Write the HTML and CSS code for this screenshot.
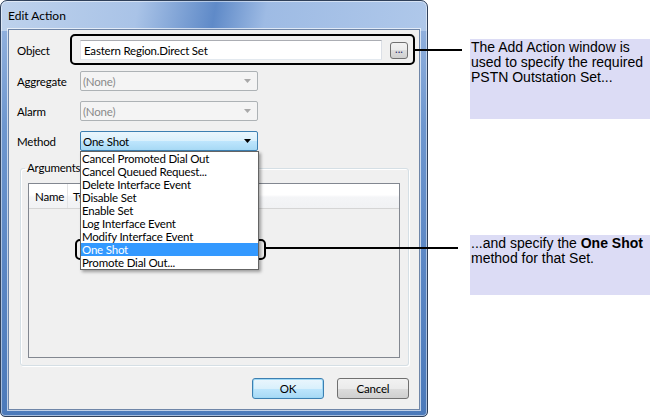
FILE: index.html
```html
<!DOCTYPE html>
<html>
<head>
<meta charset="utf-8">
<title>Edit Action</title>
<link rel="stylesheet" href="styles.css">
</head>
<body>
<div class="page">
  <div class="window">
    <div class="titlebar">Edit Action</div>
    <div class="client">
      <div class="row">
        <span class="label">Object</span>
        <div class="textbox">Eastern Region.Direct Set</div>
        <div class="browse">...</div>
      </div>
      <div class="row row-agg">
        <span class="label">Aggregate</span>
        <div class="combo disabled"><span class="combo-text">(None)</span><svg class="arrow" width="7" height="4" viewBox="0 0 7 4"><path d="M0 0h7L3.5 4z"/></svg></div>
      </div>
      <div class="row row-gap">
        <span class="label">Alarm</span>
        <div class="combo disabled"><span class="combo-text">(None)</span><svg class="arrow" width="7" height="4" viewBox="0 0 7 4"><path d="M0 0h7L3.5 4z"/></svg></div>
      </div>
      <div class="row row-gap">
        <span class="label">Method</span>
        <div class="combo active"><span class="combo-text">One Shot</span><svg class="arrow" width="7" height="4" viewBox="0 0 7 4"><path d="M0 0h7L3.5 4z"/></svg>
          <ul class="droplist">
            <li>Cancel Promoted Dial Out</li>
            <li>Cancel Queued Request...</li>
            <li>Delete Interface Event</li>
            <li>Disable Set</li>
            <li>Enable Set</li>
            <li>Log Interface Event</li>
            <li>Modify Interface Event</li>
            <li class="selected">One Shot</li>
            <li>Promote Dial Out...</li>
          </ul>
        </div>
      </div>
      <fieldset class="group">
        <legend>Arguments</legend>
        <div class="listview">
          <div class="lv-header">
            <div class="col col-name">Name</div>
            <div class="col col-type">Type</div>
          </div>
        </div>
      </fieldset>
      <div class="buttons">
        <div class="btn btn-default">OK</div>
        <div class="btn">Cancel</div>
      </div>
    </div>
  </div>
  <div class="notes">
    <div class="note note-top">The Add Action window is used to specify the required PSTN Outstation Set...</div>
    <div class="note note-bottom">...and specify the <b>One Shot</b> method for that Set.</div>
  </div>
  <div class="hl hl-object"></div>
  <div class="hl hl-method"></div>
  <div class="leader leader-object"></div>
  <div class="leader leader-method"></div>
</div>
</body>
</html>
```
FILE: styles.css
```css
html, body {
  margin: 0;
  padding: 0;
  background: #ffffff;
}

body {
  font-family: Lato, "Liberation Sans", sans-serif;
  font-size: 11.5px;
  letter-spacing: -0.2px;
  color: #000;
}

.page {
  position: relative;
  width: 660px;
  height: 418px;
  display: flex;
  align-items: flex-start;
  overflow: hidden;
}

/* ---------- window frame ---------- */
.window {
  width: 428px;
  height: 417px;
  box-sizing: border-box;
  border: 1px solid #2f405a;
  border-radius: 7px 7px 5px 5px;
  padding: 0 7px 6px;
  display: flex;
  flex-direction: column;
  background:
    linear-gradient(100deg, #bed2ec 0%, #a9c3e7 32%, #5f8ac8 50%, #9ebbe4 62%, #afc8ea 100%) top / 100% 30px no-repeat,
    linear-gradient(to bottom, #9ab7e1 0%, #6e97cf 30%, #5a86c4 65%, #4c7aba 100%);
  box-shadow: inset 0 0 0 1px rgba(255, 255, 255, 0.5);
}

.titlebar {
  height: 28px;
  display: flex;
  align-items: center;
  font-size: 12px;
  letter-spacing: 0;
  color: #000;
}

.client {
  flex: 1;
  background: #f0f0f0;
  border: 1px solid #6f86a8;
  box-shadow: 0 0 0 1px rgba(255, 255, 255, 0.65);
  padding-top: 10px;
  display: flex;
  flex-direction: column;
}

/* ---------- form rows ---------- */
.row {
  display: flex;
  align-items: center;
  height: 20px;
}

.row-agg { margin-top: 11px; }
.row-gap { margin-top: 10px; }

.label {
  width: 63px;
  margin-left: 8px;
}

.textbox {
  width: 302px;
  height: 20px;
  box-sizing: border-box;
  border: 1px solid;
  border-color: #abadb3 #dbdfe6 #e3e9ef #e2e3ea;
  background: #fff;
  padding-left: 3px;
  display: flex;
  align-items: center;
}

.browse {
  margin-left: 8px;
  width: 18px;
  height: 17px;
  box-sizing: border-box;
  border: 1px solid #707070;
  border-radius: 3px;
  background: linear-gradient(#f2f2f2 0%, #ebebeb 50%, #dddddd 50%, #cfcfcf 100%);
  font-size: 11px;
  line-height: 12px;
  text-align: center;
  color: #2a2a6a;
  letter-spacing: 0;
}

.combo {
  position: relative;
  width: 178px;
  height: 20px;
  box-sizing: border-box;
  border: 1px solid #adb2b5;
  border-radius: 2px;
  display: flex;
  align-items: center;
  padding: 0 6px 0 2px;
}

.combo-text {
  flex: 1;
}

.combo .arrow {
  display: block;
}

.combo.disabled {
  background: #f4f4f4;
  color: #8a8a8a;
}

.combo.disabled .arrow {
  fill: #a9a9a9;
}

.combo.active {
  border-color: #3c7fb1;
  background: linear-gradient(#eaf6fd 0%, #d9f0fc 50%, #bee6fd 50%, #a7d9f5 100%);
}

.combo.active .arrow {
  fill: #000;
}

.droplist {
  position: absolute;
  top: 19px;
  left: -1px;
  width: 179px;
  box-sizing: border-box;
  margin: 0;
  padding: 0;
  list-style: none;
  background: #fff;
  border: 1px solid #646464;
  box-shadow: 2px 2px 3px rgba(0, 0, 0, 0.35);
  z-index: 5;
  color: #000;
}

.droplist li {
  height: 13px;
  line-height: 13px;
  padding-left: 1px;
  white-space: nowrap;
}

.droplist li.selected {
  background: #3399ff;
  color: #fff;
}

/* ---------- arguments group ---------- */
.group {
  margin: 10px 10px 0 11px;
  padding: 8px 8px 7px 7px;
  border: 1px solid #d5dfe5;
  border-radius: 3px;
  box-shadow: 1px 1px 0 #ffffff, inset 1px 1px 0 #ffffff;
  min-inline-size: 0;
}

.group legend {
  line-height: 14px;
  padding: 0 2px;
  margin-left: -3px;
}

.listview {
  height: 175px;
  box-sizing: border-box;
  border: 1px solid #828790;
  background: #f0f0f0;
}

.lv-header {
  height: 24px;
  display: flex;
  border-bottom: 1px solid #d5d5d5;
  background: linear-gradient(#ffffff 0%, #ffffff 45%, #f4f5f7 55%, #f1f2f4 100%);
}

.col {
  display: flex;
  align-items: center;
  border-right: 1px solid #e3e4e6;
}

.col-name {
  width: 39px;
  padding-left: 6px;
  box-sizing: border-box;
}

.col-type {
  width: 100px;
  padding-left: 5px;
  box-sizing: border-box;
}

/* ---------- buttons ---------- */
.buttons {
  margin-top: 12px;
  padding-right: 10px;
  display: flex;
  justify-content: flex-end;
  gap: 13px;
}

.btn {
  width: 72px;
  height: 21px;
  box-sizing: border-box;
  border: 1px solid #707070;
  border-radius: 3px;
  background: linear-gradient(#f2f2f2 0%, #ebebeb 50%, #dddddd 50%, #cfcfcf 100%);
  display: flex;
  align-items: center;
  justify-content: center;
}

.btn-default {
  border-color: #3c7fb1;
  background: linear-gradient(#eaf6fd 0%, #d9f0fc 50%, #bee6fd 50%, #a7d9f5 100%);
  box-shadow: inset 0 0 0 1px #9fd8f5;
}

/* ---------- annotations ---------- */
.notes {
  margin-left: 42px;
  padding-top: 39px;
  display: flex;
  flex-direction: column;
}

.note {
  width: 180px;
  box-sizing: border-box;
  background: #dcdcf5;
  font-family: "Liberation Sans", Arial, sans-serif;
  font-size: 14px;
  line-height: 15px;
  letter-spacing: 0;
  padding: 1px 1px 0 1px;
  color: #000;
}

.note-top { height: 80px; }

.note-bottom {
  margin-top: 116px;
  height: 60px;
}

.hl {
  position: absolute;
  box-sizing: border-box;
  border: 2px solid #000;
  border-radius: 5px;
}

.hl-object {
  left: 70px;
  top: 34px;
  width: 345px;
  height: 31px;
}

.hl-method {
  left: 75px;
  top: 239px;
  width: 191px;
  height: 21px;
}

.leader {
  position: absolute;
  height: 2px;
  background: #000;
}

.leader-object {
  left: 415px;
  top: 49px;
  width: 47px;
}

.leader-method {
  left: 266px;
  top: 247px;
  width: 192px;
}
```
